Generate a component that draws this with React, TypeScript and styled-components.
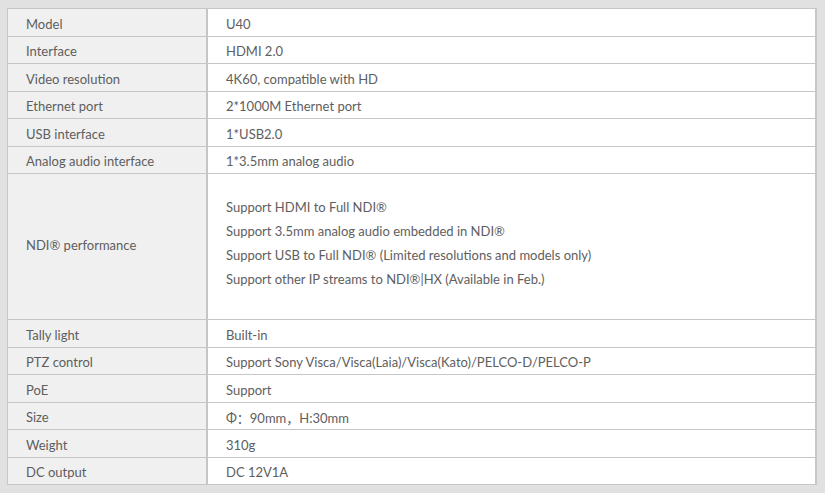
import React from "react";
import styled, { createGlobalStyle } from "styled-components";

const Global = createGlobalStyle`
  html, body { margin: 0; padding: 0; background: #e1e1e1; }
  body { font-family: Lato, "Liberation Sans", "Noto Sans CJK SC", sans-serif; }
`;

const Page = styled.div`
  width: 825px;
  height: 493px;
  padding: 8px 0 0 7px;
  box-sizing: border-box;
  background: #e1e1e1;
`;

const Table = styled.div`
  width: 810px;
  border: 1px solid #c6c6c6;
  border-right-width: 2px;
  box-sizing: border-box;
  background: #fff;
`;

const Row = styled.div<{ $h: number }>`
  display: grid;
  grid-template-columns: 200px 1fr;
  height: ${(p) => p.$h}px;
  & + & { border-top: 1px solid #c6c6c6; }
`;

const Label = styled.div<{ $tall?: boolean }>`
  background: #f0f0f0;
  border-right: 2px solid #c6c6c6;
  display: flex;
  align-items: center;
  padding: ${(p) => (p.$tall ? "0 0 4px 18px" : "2px 0 0 18px")};
  font-size: 13px;
  color: #5e5e5e;
`;

const Value = styled.div`
  display: flex;
  align-items: center;
  padding: 2px 0 0 18px;
  font-size: 13px;
  color: #5e5e5e;
`;

const List = styled.div`
  display: flex;
  flex-direction: column;
  justify-content: center;
  padding: 0 0 8px 18px;
  font-size: 13px;
  line-height: 24px;
  color: #5e5e5e;
`;

const rows: [string, string][] = [
  ["Model", "U40"],
  ["Interface", "HDMI 2.0"],
  ["Video resolution", "4K60, compatible with HD"],
  ["Ethernet port", "2*1000M Ethernet port"],
  ["USB interface", "1*USB2.0"],
  ["Analog audio interface", "1*3.5mm analog audio"],
];

const rows2: [string, string][] = [
  ["Tally light", "Built-in"],
  ["PTZ control", "Support Sony Visca/Visca(Laia)/Visca(Kato)/PELCO-D/PELCO-P"],
  ["PoE", "Support"],
  ["Size", "Φ：90mm，H:30mm"],
  ["Weight", "310g"],
  ["DC output", "DC 12V1A"],
];

const ndi = [
  "Support HDMI to Full NDI®",
  "Support 3.5mm analog audio embedded in NDI®",
  "Support USB to Full NDI® (Limited resolutions and models only)",
  "Support other IP streams to NDI®|HX (Available in Feb.)",
];

export default function App() {
  return (
    <Page>
      <Global />
      <Table>
        {rows.map(([k, v], i) => (
          <Row key={k} $h={i % 2 === 0 ? 27 : 26}>
            <Label>{k}</Label>
            <Value>{v}</Value>
          </Row>
        ))}
        <Row $h={145}>
          <Label $tall>NDI® performance</Label>
          <List>
            {ndi.map((t) => (
              <div key={t}>{t}</div>
            ))}
          </List>
        </Row>
        {rows2.map(([k, v], i) => (
          <Row key={k} $h={i % 2 === 0 ? 27 : 26}>
            <Label>{k}</Label>
            <Value>{v}</Value>
          </Row>
        ))}
      </Table>
    </Page>
  );
}
